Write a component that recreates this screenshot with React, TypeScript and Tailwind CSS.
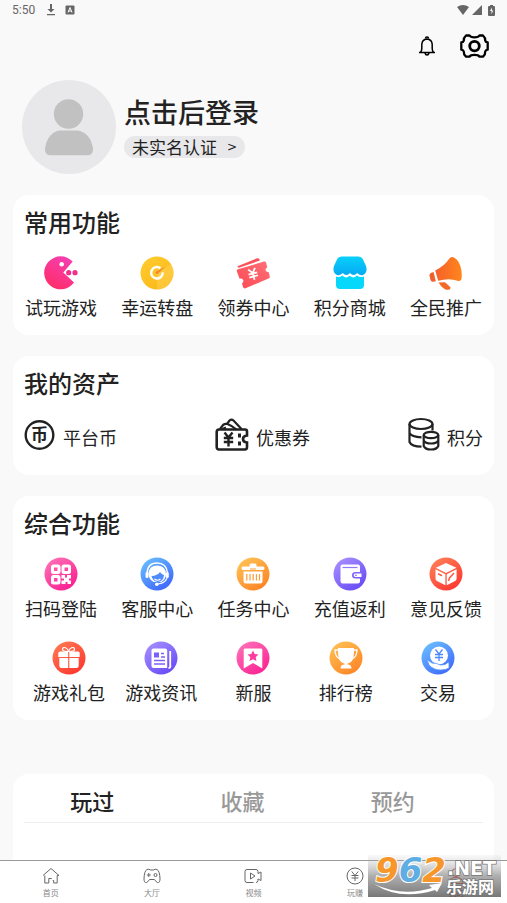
import type { ReactNode } from 'react';

type Entry = { label: string; icon: ReactNode };

function Badge({ id, from, to, children }: { id: string; from: string; to: string; children: ReactNode }) {
  return (
    <svg viewBox="0 0 34 34" className="h-[34px] w-[34px]" aria-hidden="true">
      <defs>
        <linearGradient id={id} x1="0.15" y1="0.1" x2="0.75" y2="0.95">
          <stop offset="0" stopColor={from} />
          <stop offset="1" stopColor={to} />
        </linearGradient>
      </defs>
      <circle cx="17" cy="17" r="16.5" fill={`url(#${id})`} />
      {children}
    </svg>
  );
}

const common: Entry[] = [
  {
    label: '试玩游戏',
    icon: (
      <svg viewBox="0 0 34 34" className="h-[34px] w-[34px]" aria-hidden="true">
        <defs>
          <linearGradient id="pac" x1="0.8" y1="0" x2="0.3" y2="1">
            <stop offset="0" stopColor="#f53fb4" />
            <stop offset="1" stopColor="#ff2d68" />
          </linearGradient>
        </defs>
        <path d="M19.3 16.500 28.700 5.500A16.500 16.500 0 1 0 30 26.500Z" fill="url(#pac)" />
        <circle cx="17.700" cy="8.300" r="2.300" fill="#fff" />
        <circle cx="24.700" cy="16.700" r="2.600" fill="#f0308c" />
        <circle cx="31" cy="16.700" r="2.600" fill="#f0308c" />
      </svg>
    ),
  },
  {
    label: '幸运转盘',
    icon: (
      <Badge id="wheel" from="#ffca2c" to="#fcb81a">
        <path d="M31 8A16.500 16.500 0 0 1 17 33.500L17 17Z" fill="#ffe070" opacity="0.35" />
        <path d="M20.500 12.200A5.800 5.800 0 1 0 22.700 16.300" fill="none" stroke="#fff" strokeWidth="2.500" />
        <path d="m16 15.700 9.600-5.200-8 7.600a1.500 1.500 0 0 1-1.600-2.400Z" fill="#f58634" />
      </Badge>
    ),
  },
  {
    label: '领券中心',
    icon: (
      <svg viewBox="0 0 34 34" className="h-[34px] w-[34px]" aria-hidden="true">
        <defs>
          <linearGradient id="ticket" x1="0" y1="1" x2="1" y2="0">
            <stop offset="0" stopColor="#fb4a53" />
            <stop offset="1" stopColor="#ff6f78" />
          </linearGradient>
        </defs>
        <path d="M1.500 10.200 21 2.300q1.800-.5 2.500 1.300l.4 1L3 11.700q-1.800 0-1.500-1.500Z" fill="#f8525c" />
        <path
          d="m2 13.300 26-7.700q1.800-.4 2.200 1.400l1.100 4.200q-2.300 1.500-1.600 3.200.7 1.500 2.900 1.500l1.200 4.700q.2 1.500-1.300 2L9.500 32.300q-1.800.5-2.500-1.300l-1-3.800q2-1.500 1.200-3.200-1-1.700-3.600-1.300L.8 15.200q-.2-1.500 1.200-1.900Z"
          fill="url(#ticket)"
        />
        <g transform="rotate(-15 17 18)">
          <path d="m13.500 12.500 3.500 4.500 3.500-4.500M12.500 17.500h9M12.500 20.500h9M17 17v7" fill="none" stroke="#fff" strokeWidth="1.800" />
        </g>
      </svg>
    ),
  },
  {
    label: '积分商城',
    icon: (
      <svg viewBox="0 0 34 34" className="h-[34px] w-[34px]" aria-hidden="true">
        <defs>
          <linearGradient id="shop" x1="0" y1="0" x2="0" y2="1">
            <stop offset="0" stopColor="#08d0fb" />
            <stop offset="1" stopColor="#06aaf2" />
          </linearGradient>
        </defs>
        <path d="M3 20.500q3.200 1.500 6.400-1 3.500 3.800 7.300.3 3.600 3.500 7.200-.3 3 2.500 7.100 1v8.500q0 4-4 4H7q-4 0-4-4Z" fill="#06d8fb" />
        <path
          d="M8.500.5h17q3 0 4.300 2.500l3.200 7q2 6.500-3 9-3.500 1-5.800-1.900-3.600 4-7.200 0-3.600 4-7.200 0Q7.500 20 4 19q-5-2.500-3-9l3.200-7Q5.500.5 8.500.5Z"
          fill="url(#shop)"
        />
      </svg>
    ),
  },
  {
    label: '全民推广',
    icon: (
      <svg viewBox="0 0 34 34" className="h-[34px] w-[34px]" aria-hidden="true">
        <defs>
          <linearGradient id="horn" x1="0" y1="0" x2="1" y2="0">
            <stop offset="0" stopColor="#f5602c" />
            <stop offset="1" stopColor="#ff861b" />
          </linearGradient>
        </defs>
        <path d="M6.200 14.500Q16 9.500 20 3q1.800-2.800 5-1.500Q31 4.500 32.500 15q.7 7.500-.6 9-1 1.600-3.500.8-8-3-19.200 0Z" fill="url(#horn)" />
        <path d="m4.600 16-2.800 1q-1.500.7-1.300 2.500l1 4.500q.6 2 2.500 1.800l2.800-.6Z" fill="#f0602c" />
        <path d="m9.500 26.500 6.500-.3 5.500 5-.3 1.600q-.5.900-1.700.9h-2.500q-3.500-1-7.500-7.200Z" fill="#f4682a" />
      </svg>
    ),
  },
];

const services: Entry[] = [
  {
    label: '扫码登陆',
    icon: (
      <Badge id="scan" from="#ff6db4" to="#fb1f92">
        <g fill="none" stroke="#fff" strokeWidth="3">
          <rect x="8.500" y="9" width="6.500" height="6.500" rx="1" />
          <rect x="19" y="9" width="6.500" height="6.500" rx="1" />
          <rect x="8.500" y="19.500" width="6.500" height="6.500" rx="1" />
        </g>
        <path d="M17.500 18h3.500v2.500h2V18h4v3.500h-2v2h2v3.500h-3.500v-2h-2v2h-4v-3.500h2.500v-2h-2.500Z" fill="#fff" />
      </Badge>
    ),
  },
  {
    label: '客服中心',
    icon: (
      <Badge id="support" from="#66b8ff" to="#3f69fb">
        <path d="M7 16.500Q7.500 6 17 6t10.500 10" fill="none" stroke="#fff" strokeWidth="1.400" />
        <path d="M8.500 17.500Q8.500 8.500 17.500 8.500 26 9 26 17.500q-.5 5-4.500 7.500h-8Q9 22.500 8.500 17.500Z" fill="#fff" />
        <path d="M11.500 19q6-.3 8.500-4 1.500 2.500 4 3-.3 6-6 7-5.300-.5-6.500-6Z" fill="#4f8bfc" />
        <path d="M14.500 22q3 2.500 6 0" fill="none" stroke="#fff" strokeWidth="1.200" />
        <rect x="5.500" y="15" width="3" height="6" rx="1.500" fill="#fff" />
        <rect x="25.800" y="15" width="3" height="6" rx="1.500" fill="#fff" />
        <path d="M27 21q-2 5.500-9.500 6" fill="none" stroke="#fff" strokeWidth="1.200" />
        <circle cx="16.800" cy="27.200" r="1.800" fill="#fff" />
      </Badge>
    ),
  },
  {
    label: '任务中心',
    icon: (
      <Badge id="task" from="#ffbf52" to="#fd8526">
        <path d="M7 9.500h6.500V8q0-1.500 1.500-1.500h4q1.500 0 1.500 1.500v1.500H27q1.500 0 1.500 1.700T27 13H7q-1.500 0-1.500-1.800T7 9.500Z" fill="#fff" />
        <path d="M14 12h6" stroke="#fda03c" strokeWidth="1" />
        <path d="M7.500 14.500h19V24q0 2.500-2.500 2.500H10Q7.500 26.500 7.500 24Z" fill="#fff" />
        <path d="M10.800 17v6.500M14 17v6.500M17.200 17v6.500M20.400 17v6.500M23.500 17v6.500" stroke="#fd9c38" strokeWidth="1.200" />
      </Badge>
    ),
  },
  {
    label: '充值返利',
    icon: (
      <Badge id="wallet" from="#a48bff" to="#6a4df7">
        <path d="M9.500 7.500H25q2 0 2 2V15h-4.500q-3.500 0-3.500 3.200t3.500 3.300H27V24q0 2.500-2.500 2.500h-15Q7.500 26.500 7.500 24V9.500q0-2 2-2Z" fill="#fff" />
        <path d="M9.500 10.500h15" stroke="#9279fc" strokeWidth="1.200" />
        <path d="M22.500 16.500h6V20h-6q-1.800 0-1.800-1.800T22.500 16.500Z" fill="#fff" />
        <circle cx="23" cy="18.300" r="0.800" fill="#7256f8" />
      </Badge>
    ),
  },
  {
    label: '意见反馈',
    icon: (
      <Badge id="feedback" from="#ff7b55" to="#fd3a33">
        <path d="M17 6 27.500 10.800 17 16 6.700 10.800Z" fill="#fff" />
        <path d="m6.500 12.300 9.900 5v10.900l-8.400-4.200q-1.500-.7-1.500-2.200Z" fill="#fff" />
        <path d="m27.600 12.300-9.900 5v10.900l8.400-4.200q1.500-.7 1.500-2.200Z" fill="#fff" />
        <path d="m9 16.800 4 1.900M19.500 24l1-3 4.500-5" fill="none" stroke="#fd5a42" strokeWidth="1.500" />
      </Badge>
    ),
  },
];

const extras: Entry[] = [
  {
    label: '游戏礼包',
    icon: (
      <Badge id="gift" from="#ff7550" to="#fd3a30">
        <path d="M16.500 10.500q-6.500.2-6-2.500.5-2.200 3-1.200 2.500 1.200 3 3.700.5-2.500 3-3.700 2.500-1 3 1.200.5 2.700-6 2.500Z" fill="none" stroke="#fff" strokeWidth="1.200" />
        <path d="M8 10.500h8.200V16H6.300v-4q0-1.500 1.700-1.500ZM17.300 10.500H26q1.700 0 1.700 1.500v4H17.300ZM7.300 17h8.900v10H9.500q-2.200 0-2.200-2ZM17.300 17h9.400v8q0 2-2.200 2h-7.200Z" fill="#fff" />
      </Badge>
    ),
  },
  {
    label: '游戏资讯',
    icon: (
      <Badge id="news" from="#a18aff" to="#6a4df8">
        <path d="M9.500 7.500H21q2.200 0 2.200 2V27H9.500q-2 0-2-2V9.500q0-2 2-2Z" fill="#fff" />
        <path d="M25.300 11h.9v14.500M24.500 27q2 0 2-2.500" fill="none" stroke="#fff" strokeWidth="1.800" />
        <rect x="10" y="11.500" width="5" height="5" fill="#7b60fa" />
        <path d="M17 12.500h3M17 16h4M10 19.500h11M10 23h11" stroke="#7b60fa" strokeWidth="1.400" />
      </Badge>
    ),
  },
  {
    label: '新服',
    icon: (
      <Badge id="fresh" from="#ff6cb5" to="#fb2595">
        <path d="M9 7.500h16q1.300 0 1.300 1.300V27.500L17 22l-9.300 5.500V8.800Q7.700 7.500 9 7.500Z" fill="#fff" />
        <path d="m17 9.500 1.700 3.500 3.700.5-2.700 2.700.7 3.800-3.400-1.800-3.400 1.800.7-3.800-2.700-2.700 3.700-.5Z" fill="#fc3d9f" />
      </Badge>
    ),
  },
  {
    label: '排行榜',
    icon: (
      <Badge id="rank" from="#ffbd50" to="#fd8728">
        <path d="M9 7h16q.5 11-3 14-2 1.500-5 1.500T12 21q-3.500-3-3-14Z" fill="#fff" />
        <path d="M9.500 9H6q0 7 5.500 9.500M24.500 9H28q0 7-5.500 9.500" fill="none" stroke="#fff" strokeWidth="1.300" />
        <path d="M15.500 22h3v1.500q4 0 4 4h-11q0-4 4-4Z" fill="#fff" />
      </Badge>
    ),
  },
  {
    label: '交易',
    icon: (
      <Badge id="trade" from="#69baff" to="#3f6cfb">
        <circle cx="18" cy="14.500" r="9" fill="#fff" />
        <path d="m14.500 8.500 3.500 4.500 3.500-4.500M14 13.500h8M14 16.500h8M18 13v7" fill="none" stroke="#4c88fd" strokeWidth="1.300" />
        <path d="m6 18.500 5 3.500 4.500.5 4 1.500q5 .5 8-3l.5 2v4q-3 2-8.500 2-7 0-11.500-5Z" fill="#fff" stroke="#5595fd" strokeWidth="0.800" />
      </Badge>
    ),
  },
];

const assets: Entry[] = [
  {
    label: '平台币',
    icon: (
      <svg viewBox="0 0 32 32" className="h-8 w-8" aria-hidden="true">
        <circle cx="15.500" cy="16" r="13.800" fill="none" stroke="#222" strokeWidth="2.400" />
        <text x="15.500" y="22" fontSize="17" fontWeight="700" fill="#222" textAnchor="middle" fontFamily="'Noto Sans CJK SC', sans-serif">
          币
        </text>
      </svg>
    ),
  },
  {
    label: '优惠券',
    icon: (
      <svg viewBox="0 0 34 34" className="h-[34px] w-[34px]" fill="none" stroke="#222" strokeWidth="2.600" aria-hidden="true">
        <path d="M4 12.500h26q2 0 2 2v4q-4 .3-4 3.500t4 3.500V30q0 2.500-2 2.500H4q-2.300 0-2.300-2.500V15q0-2.500 2.300-2.500Z" />
        <path d="M5 12 8 8q2-1.500 4-1l2.500-3.500q2-1.800 4 0l8 8.500M12.500 7q4 1.500 9 5.500M7.500 12l3.500-1.500" strokeWidth="2.200" />
        <path d="M24.500 16.500v4M24.500 24.500v4" strokeWidth="3" />
        <path d="m9.500 15.500 4 5 4-5M8.800 21h9.400M8.800 25h9.400M13.500 20.500v9" strokeWidth="2.400" />
      </svg>
    ),
  },
  {
    label: '积分',
    icon: (
      <svg viewBox="0 0 32 34" className="h-[34px] w-8" fill="none" stroke="#222" strokeWidth="2.200" aria-hidden="true">
        <ellipse cx="13" cy="7" rx="11.500" ry="5" />
        <path d="M1.500 7v18q2 4.500 12 4.700M1.500 16q2 3.800 12 4.300M24.500 7v6.500" />
        <ellipse cx="23" cy="18" rx="7.300" ry="3.200" />
        <path d="M15.700 18v11q1.500 3.500 7.300 3.500t7.300-3.500V18M15.700 23.500q1.500 3 7.300 3t7.300-3" />
      </svg>
    ),
  },
];

const navItems: Entry[] = [
  {
    label: '首页',
    icon: <path d="M1 8.500 9 1.500l8 7h-1.800V16h-3.500v-2.500h-1M2.800 8.500V16h4v-4.500h3" />,
  },
  {
    label: '大厅',
    icon: (
      <>
        <path d="M4 2.500q2-.8 3.500.5h3q1.500-1.300 3.500-.5 2.800 1.500 3 9.500 0 4-2.500 3.500-1.500-.5-3-3h-5q-1.500 2.500-3 3Q1 16 1 12q.2-8 3-9.500Z" />
        <path d="M5.800 6v4M3.800 8h4" />
        <circle cx="12.500" cy="8" r="1.500" />
      </>
    ),
  },
  {
    label: '视频',
    icon: <path d="M9.500 15.500H3q-2 0-2-2v-9q0-2 2-2h9q2 0 2 2v2l3-1.500v8.500L14 12v1.500q0 2-2 2M6.500 6v6l4.500-3Z" />,
  },
  {
    label: '玩赚',
    icon: (
      <>
        <circle cx="9" cy="9" r="8" />
        <path d="m5.800 4.500 3.200 4 3.200-4M5.500 8.500h7M5.500 11h7M9 8.500V14" />
      </>
    ),
  },
  {
    label: '我的',
    icon: (
      <g stroke="#e0402c">
        <circle cx="9" cy="5.500" r="4" />
        <path d="M2 16.500q0-6 7-6t7 6ZM6.500 14q2.500 1.500 5 0" />
      </g>
    ),
  },
];

const cardClass = 'rounded-2xl bg-white pt-[11px]';
const headingClass = 'text-2xl leading-8 font-medium';

function IconRow({ items, className = '' }: { items: Entry[]; className?: string }) {
  return (
    <div className={`grid grid-cols-5 ${className}`}>
      {items.map((item) => (
        <button key={item.label} type="button" className="flex flex-col items-center gap-[5px] whitespace-nowrap">
          {item.icon}
          <span className="text-lg leading-6">{item.label}</span>
        </button>
      ))}
    </div>
  );
}

function StatusBar() {
  return (
    <div className="flex h-5 items-center justify-between px-3 text-[#666]">
      <div className="flex items-center">
        <span className="font-[Roboto,sans-serif] text-xs leading-5">5:50</span>
        <svg viewBox="0 0 10 12" className="ml-[11px] h-3 w-2.5" aria-hidden="true">
          <path d="M4 0h2v5h2.500L5 8.500 1.500 5H4ZM1 10h8v1.200H1Z" fill="currentColor" />
        </svg>
        <svg viewBox="0 0 10 10" className="ml-[9px] h-2.5 w-2.5" aria-hidden="true">
          <rect x="0.500" y="0.500" width="9" height="9" rx="1" fill="currentColor" />
          <path d="m3 7.500 2-5 2 5M3.500 6h3" fill="none" stroke="#fff" />
        </svg>
      </div>
      <div className="flex items-center">
        <svg viewBox="0 0 12 10" className="h-2.5 w-3" fill="currentColor" aria-hidden="true">
          <path d="M0 2q6-4 12 0L6 10Z" />
        </svg>
        <svg viewBox="0 0 10 10" className="ml-[3px] h-2.5 w-2.5" fill="currentColor" aria-hidden="true">
          <path d="M10 0v10H0Z" />
        </svg>
        <svg viewBox="0 0 7 11" className="ml-1.5 h-[11px] w-[7px]" aria-hidden="true">
          <path d="M2 0h3v1h1q1 0 1 1v8q0 1-1 1H1q-1 0-1-1V2q0-1 1-1h1Z" fill="currentColor" />
          <path d="M4 2.500 2 6h1.500v3L5.300 5.500H4Z" fill="#fff" />
        </svg>
      </div>
    </div>
  );
}

function Header() {
  return (
    <header className="flex h-10 items-center justify-end gap-6 pt-3 pr-[18px] text-black">
      <button type="button" aria-label="消息">
        <svg viewBox="0 0 18 20" className="h-5 w-[18px]" fill="none" stroke="currentColor" strokeWidth="1.500" aria-hidden="true">
          <path d="M1 16.500h16M2.500 16.200q1.300-1.200 1.300-3.700V8.500q.2-5 5.200-5.500 5 .5 5.200 5.500v4q0 2.500 1.300 3.700M7 17q.5 2 2 2t2-2" />
          <path d="M7.500 2.500q0-1.500 1.500-1.500t1.500 1.500" />
        </svg>
      </button>
      <button type="button" aria-label="设置">
        <svg viewBox="0 0 29 29" className="h-[29px] w-[29px]" fill="none" stroke="currentColor" strokeWidth="2.300" strokeLinejoin="round" aria-hidden="true">
          <path d="M6 3.500h3.500q1 1.800 5 1.800t5-1.800H23q2.500 2.200 2.200 5 .3 1.700 2.500 2v7.200q-2.200.3-2.500 2 .3 2.800-2.200 5h-3.500q-1-1.800-5-1.800t-5 1.800H6q-2.500-2.200-2.200-5-.3-1.700-2.500-2v-7.200q2.200-.3 2.500-2-.3-2.800 2.200-5Z" />
          <circle cx="14.500" cy="14.100" r="4.800" strokeWidth="2.800" />
        </svg>
      </button>
    </header>
  );
}

function Profile() {
  return (
    <section className="mt-5 flex items-center gap-2 pl-[22px]">
      <svg viewBox="0 0 94 94" className="h-[94px] w-[94px]" role="img" aria-label="头像">
        <circle cx="47" cy="47" r="47" fill="#e8e8ea" />
        <g fill="#c1c1c1">
          <circle cx="46.500" cy="34" r="14.700" />
          <path d="M38 50.500h17Q68 52 71 68q.5 7-5 7.300H28q-5.500-.3-5-7.300Q26 52 38 50.500Z" />
        </g>
      </svg>
      <div className="flex flex-col items-start gap-1 pb-[5px]">
        <h1 className="text-[27px] leading-10 font-medium">点击后登录</h1>
        <button type="button" className="flex h-[22px] items-center gap-2.5 rounded-full bg-[#e8e8ea] px-2 text-[17px] leading-[22px]">
          <span>未实名认证</span>
          <span className="font-['DejaVu_Sans',sans-serif] text-xs leading-[22px]">&gt;</span>
        </button>
      </div>
    </section>
  );
}

function Watermark() {
  return (
    <svg viewBox="0 0 133 42" className="absolute right-1.5 bottom-1.5 h-[42px] w-[133px] overflow-visible" aria-label="962.NET 乐游网">
      <defs>
        <linearGradient id="plate" x1="0" y1="0" x2="0" y2="1">
          <stop offset="0" stopColor="#bbb" stopOpacity="0.1" />
          <stop offset="0.5" stopColor="#777" stopOpacity="0.6" />
          <stop offset="1" stopColor="#555" stopOpacity="0.8" />
        </linearGradient>
      </defs>
      <rect width="133" height="42" fill="url(#plate)" />
      <text
        x="7"
        y="27"
        fontFamily="'DejaVu Sans', sans-serif"
        fontWeight="700"
        fontStyle="italic"
        fontSize="34"
        stroke="#fff"
        strokeWidth="2"
        paintOrder="stroke"
        fill="#f7962a"
      >
        9<tspan fill="#5faee3">6</tspan>2
      </text>
      <g fill="#fff" stroke="#777" strokeWidth="1.500" paintOrder="stroke" fontWeight="700">
        <text x="79" y="20" fontSize="19" fontFamily="'DejaVu Sans', sans-serif">
          .NET
        </text>
        <text x="78" y="38" fontSize="16" fontFamily="'Noto Sans CJK SC', sans-serif">
          乐游网
        </text>
      </g>
      <path d="M6 29Q34 42 64 33l-3-3 13-2-5 9-2-2Q32 46 6 29Z" fill="#fff" />
    </svg>
  );
}

function BottomNav() {
  return (
    <nav className="relative grid grid-cols-5 border-t border-[#999] bg-white pt-1.5 pb-[5px]">
      {navItems.map((item) => (
        <a key={item.label} href="#" className="flex flex-col items-center gap-0.5 text-[#888] last-of-type:text-[#e0402c]">
          <svg viewBox="0 0 18 18" className="h-[18px] w-[18px]" fill="none" stroke="#666" strokeWidth="1" aria-hidden="true">
            {item.icon}
          </svg>
          <span className="text-[8px] leading-[11px]">{item.label}</span>
        </a>
      ))}
      <Watermark />
    </nav>
  );
}

const tabs = ['玩过', '收藏', '预约'];

export default function App() {
  return (
    <div className="flex min-h-screen flex-col bg-[#f9f9f9] font-['Noto_Sans_CJK_SC',sans-serif] text-[#222]">
      <StatusBar />
      <Header />
      <Profile />
      <main className="mt-[21px] flex flex-1 flex-col gap-[21px] px-[13px]">
        <section className={`${cardClass} pb-4`}>
          <h2 className={`${headingClass} px-[11px]`}>常用功能</h2>
          <IconRow items={common} className="mt-[18px]" />
        </section>

        <section className={`${cardClass} px-[11px] pb-6`}>
          <h2 className={headingClass}>我的资产</h2>
          <div className="mt-[18px] flex items-end justify-between">
            {assets.map((item) => (
              <button key={item.label} type="button" className="flex items-end gap-[7px]">
                {item.icon}
                <span className="text-lg leading-7">{item.label}</span>
              </button>
            ))}
          </div>
        </section>

        <section className={`${cardClass} pb-4`}>
          <h2 className={`${headingClass} px-[11px]`}>综合功能</h2>
          <IconRow items={services} className="mt-[18px]" />
          <IconRow items={extras} className="mt-[21px] px-2.5" />
        </section>

        <section className="mt-[33px] flex-1 rounded-t-2xl bg-white pt-2.5">
          <div role="tablist" className="grid grid-cols-3 pr-[26px] pl-1 text-[22px] leading-8 font-medium">
            {tabs.map((tab, idx) => (
              <button
                key={tab}
                type="button"
                role="tab"
                aria-selected={idx === 0}
                className="text-[#999] aria-selected:text-[#222]"
              >
                {tab}
              </button>
            ))}
          </div>
          <hr className="mx-[11px] mt-1.5 border-[#eee]" />
        </section>
      </main>
      <BottomNav />
    </div>
  );
}
